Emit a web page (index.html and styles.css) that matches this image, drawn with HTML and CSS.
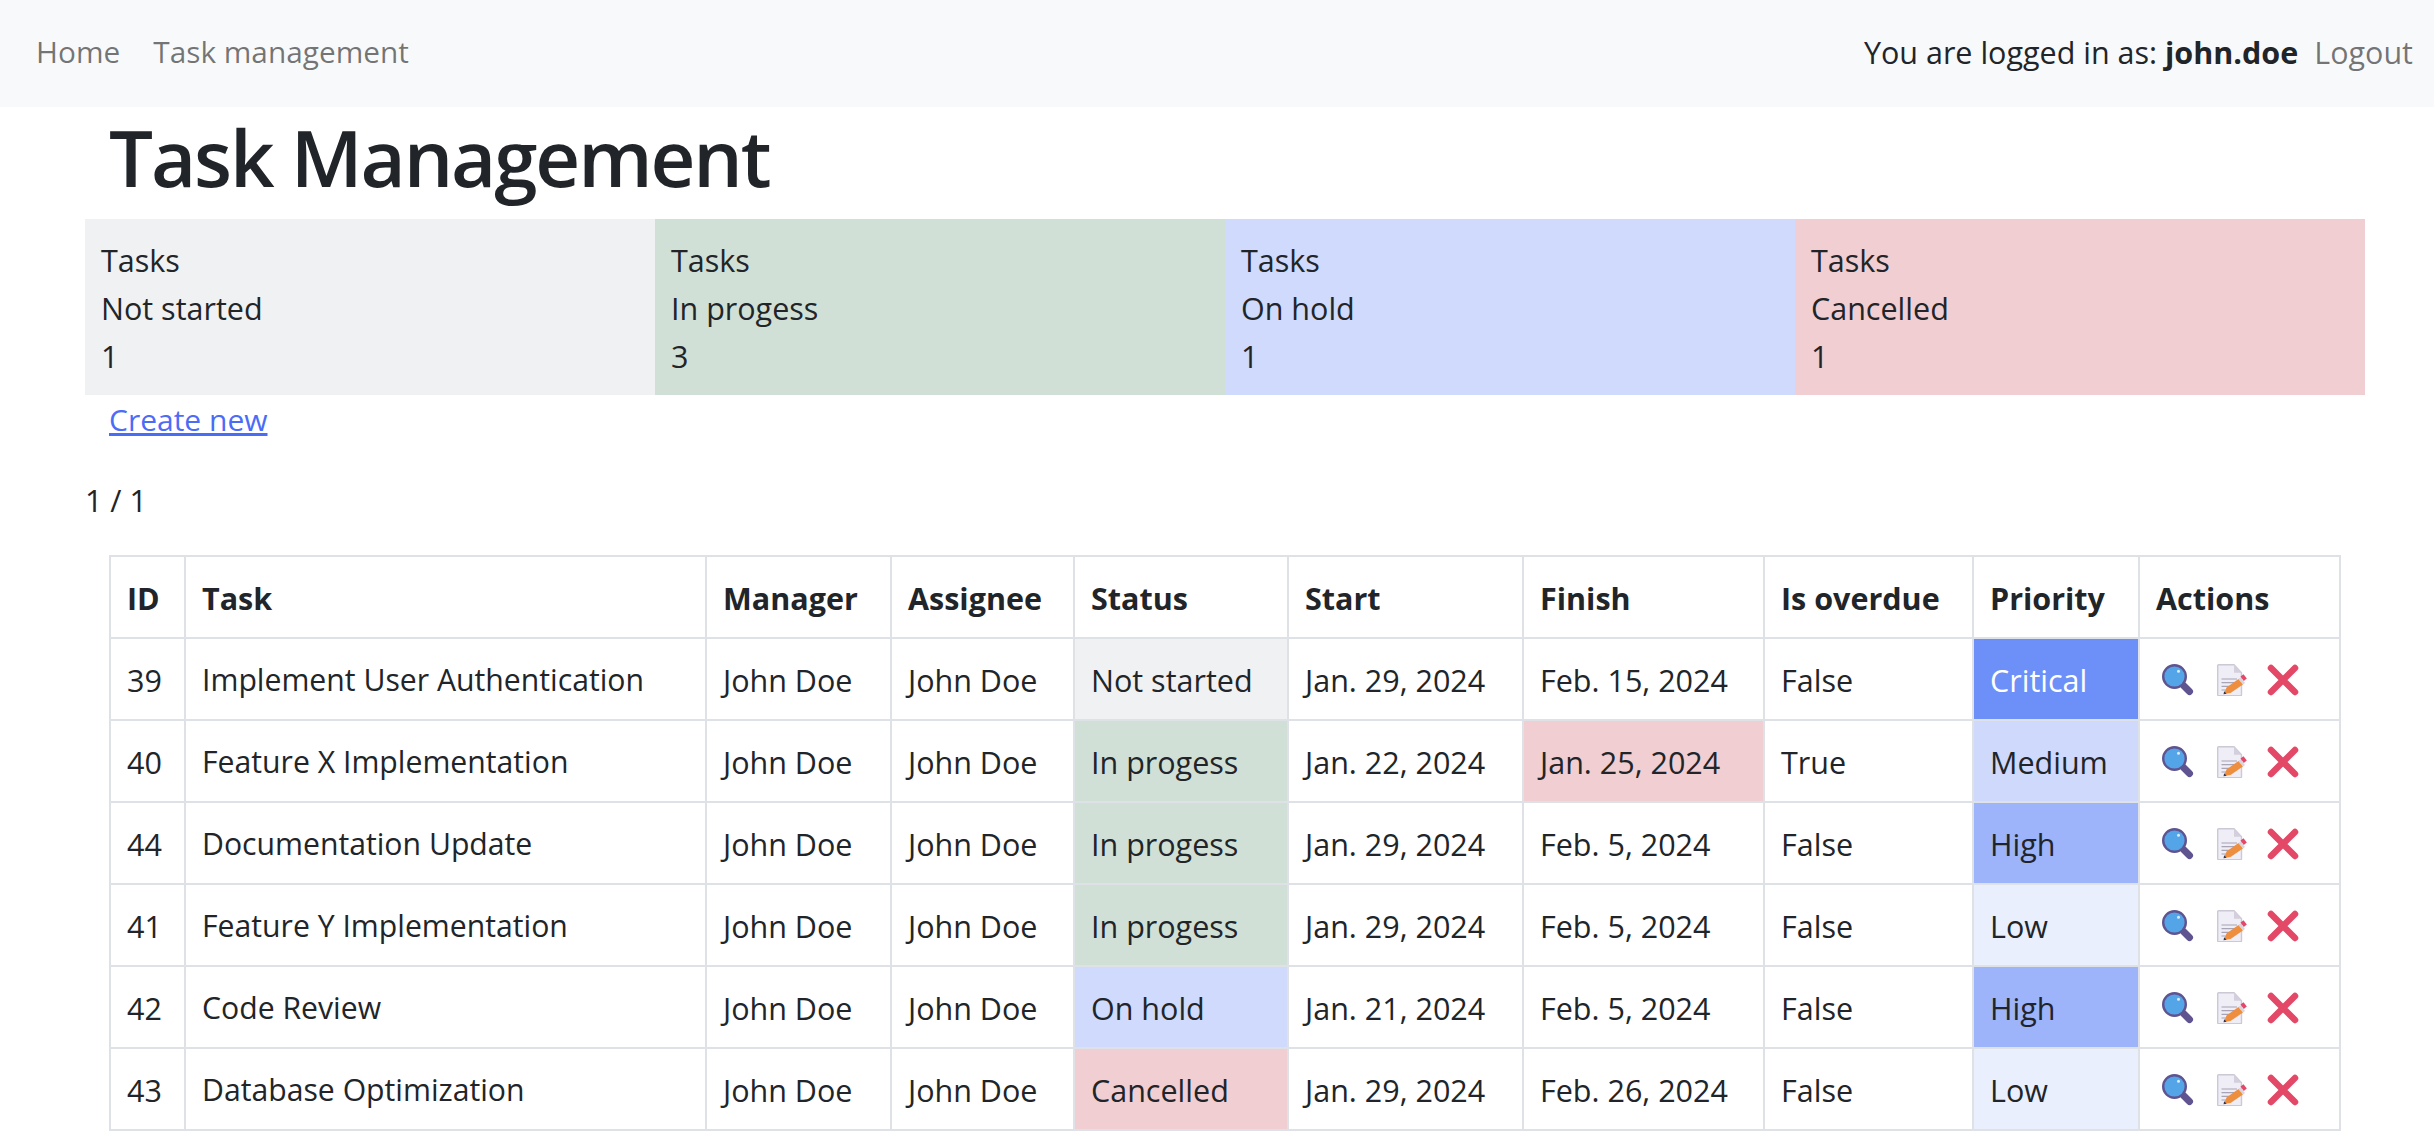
FILE: index.html
```html
<!DOCTYPE html>
<html lang="en">
<head>
<meta charset="utf-8">
<title>Task Management</title>
<link rel="stylesheet" href="styles.css">
</head>
<body>
<svg class="defs" width="0" height="0" aria-hidden="true">
  <defs>
    <symbol id="i-view" viewBox="0 0 32 32">
      <line x1="21.500" y1="21.500" x2="27.500" y2="27.500" stroke="#5f5490" stroke-width="7" stroke-linecap="round"/>
      <circle cx="12.500" cy="12.500" r="11.300" fill="#54a4e8" stroke="#5f5490" stroke-width="2.400"/>
      <circle cx="16.500" cy="7.300" r="1.500" fill="#d8ecfb"/>
    </symbol>
    <symbol id="i-edit" viewBox="0 0 32 32">
      <path d="M.7 1.700a1 1 0 0 1 1-1H17l7.500 8v22a1 1 0 0 1-1 1H1.700a1 1 0 0 1-1-1z" fill="#efedf5" stroke="#cdc8d6" stroke-width="1.400"/>
      <path d="M17 .7v8h7.500z" fill="#d3cfdc"/>
      <path d="M4.500 15h15.500M4.500 18.700h15.500M4.500 22.300h10M4.500 26h5" stroke="#a8a3b5" stroke-width="1.200"/>
      <path d="M9.500 23.500L21.500 15l4.500 5.500-12.500 8.500-6.500 1z" fill="#ee8e3f"/>
      <path d="M21.500 15l2-1.500 4.500 5.500-2 1.500z" fill="#d8d3dc"/>
      <path d="M23.500 12.500l3-2.200 3.300 4.200-3 2.500z" fill="#e2486a"/>
      <path d="M6.500 30.300l.7-3 2.400 2.400z" fill="#3a3440"/>
    </symbol>
    <symbol id="i-del" viewBox="0 0 32 32">
      <path d="M4 4l24 24M28 4L4 28" stroke="#e34867" stroke-width="6.500" stroke-linecap="round" fill="none"/>
    </symbol>
  </defs>
</svg>
<nav class="navbar">
  <ul class="nav-list">
    <li><a class="nav-link" href="#">Home</a></li>
    <li><a class="nav-link" href="#">Task management</a></li>
  </ul>
  <div class="nav-user">
    <span class="user-text">You are logged in as: <strong>john.doe</strong></span>
    <a class="nav-link" href="#">Logout</a>
  </div>
</nav>
<main class="page">
  <h1 class="title">Task Management</h1>
  <section class="stats">
    <div class="stat st-gray"><div>Tasks</div><div>Not started</div><div>1</div></div>
    <div class="stat st-green"><div>Tasks</div><div>In progess</div><div>3</div></div>
    <div class="stat st-blue"><div>Tasks</div><div>On hold</div><div>1</div></div>
    <div class="stat st-red"><div>Tasks</div><div>Cancelled</div><div>1</div></div>
  </section>
  <p class="create"><a href="#">Create new</a></p>
  <p class="pager">1 / 1</p>
  <div class="table-wrap">
  <table class="tasks">
    <colgroup>
      <col class="c1"><col class="c2"><col class="c3"><col class="c4"><col class="c5"><col class="c6"><col class="c7"><col class="c8"><col class="c9"><col class="c10">
    </colgroup>
    <thead>
      <tr><th>ID</th><th>Task</th><th>Manager</th><th>Assignee</th><th>Status</th><th>Start</th><th>Finish</th><th>Is overdue</th><th>Priority</th><th>Actions</th></tr>
    </thead>
    <tbody>
      <tr><td>39</td><td class="name">Implement User Authentication</td><td>John Doe</td><td>John Doe</td><td class="st-gray">Not started</td><td>Jan. 29, 2024</td><td>Feb. 15, 2024</td><td>False</td><td class="p-critical">Critical</td><td class="actions"><svg class="ic ic-view"><use href="#i-view"/></svg><svg class="ic ic-edit"><use href="#i-edit"/></svg><svg class="ic"><use href="#i-del"/></svg></td></tr>
      <tr><td>40</td><td class="name">Feature X Implementation</td><td>John Doe</td><td>John Doe</td><td class="st-green">In progess</td><td>Jan. 22, 2024</td><td class="st-red">Jan. 25, 2024</td><td>True</td><td class="p-medium">Medium</td><td class="actions"><svg class="ic ic-view"><use href="#i-view"/></svg><svg class="ic ic-edit"><use href="#i-edit"/></svg><svg class="ic"><use href="#i-del"/></svg></td></tr>
      <tr><td>44</td><td class="name">Documentation Update</td><td>John Doe</td><td>John Doe</td><td class="st-green">In progess</td><td>Jan. 29, 2024</td><td>Feb. 5, 2024</td><td>False</td><td class="p-high">High</td><td class="actions"><svg class="ic ic-view"><use href="#i-view"/></svg><svg class="ic ic-edit"><use href="#i-edit"/></svg><svg class="ic"><use href="#i-del"/></svg></td></tr>
      <tr><td>41</td><td class="name">Feature Y Implementation</td><td>John Doe</td><td>John Doe</td><td class="st-green">In progess</td><td>Jan. 29, 2024</td><td>Feb. 5, 2024</td><td>False</td><td class="p-low">Low</td><td class="actions"><svg class="ic ic-view"><use href="#i-view"/></svg><svg class="ic ic-edit"><use href="#i-edit"/></svg><svg class="ic"><use href="#i-del"/></svg></td></tr>
      <tr><td>42</td><td class="name">Code Review</td><td>John Doe</td><td>John Doe</td><td class="st-blue">On hold</td><td>Jan. 21, 2024</td><td>Feb. 5, 2024</td><td>False</td><td class="p-high">High</td><td class="actions"><svg class="ic ic-view"><use href="#i-view"/></svg><svg class="ic ic-edit"><use href="#i-edit"/></svg><svg class="ic"><use href="#i-del"/></svg></td></tr>
      <tr><td>43</td><td class="name">Database Optimization</td><td>John Doe</td><td>John Doe</td><td class="st-red">Cancelled</td><td>Jan. 29, 2024</td><td>Feb. 26, 2024</td><td>False</td><td class="p-low">Low</td><td class="actions"><svg class="ic ic-view"><use href="#i-view"/></svg><svg class="ic ic-edit"><use href="#i-edit"/></svg><svg class="ic"><use href="#i-del"/></svg></td></tr>
    </tbody>
  </table>
  </div>
</main>
</body>
</html>
```
FILE: styles.css
```css
* { box-sizing: border-box; }
html, body { margin: 0; padding: 0; }
body {
  font-family: "Open Sans", "Noto Sans", sans-serif;
  font-size: 30.5px;
  line-height: 48px;
  color: #212529;
  background: #fff;
  overflow-x: hidden;
}
.defs { position: absolute; }
.navbar {
  display: flex;
  justify-content: space-between;
  align-items: center;
  height: 107px;
  background: #f8f9fa;
  padding: 0 5px 3px 20px;
}
.nav-list { display: flex; list-style: none; margin: 0; padding: 0; font-size: 29.8px; }
.nav-list li + li { margin-left: 1px; }
.nav-link { display: block; padding: 8px 16px; color: rgba(0,0,0,.55); text-decoration: none; }
.nav-user { display: flex; align-items: center; }
.user-text strong { font-weight: 700; }
.page { padding: 0 69px 0 85px; }
.title { margin: 0; padding: 0 24px; height: 112px; font-size: 78px; line-height: 100px; font-weight: 600; letter-spacing: -2.100px; }
.stats { display: grid; grid-template-columns: repeat(4, 1fr); }
.stat { padding: 17px 16px 15px; height: 176px; }
.st-gray { background: #eff1f3; }
.st-green { background: #d1e0d6; }
.st-blue { background: #cfdafc; }
.st-red { background: #f0ced2; }
.create { margin: 0; padding: 0 24px; height: 80px; line-height: 50px; font-size: 30px; }
.create a { color: #4a6cf7; }
.pager { margin: 0; padding-top: 1px; height: 80px; line-height: 48px; }
.table-wrap { padding: 0 24px; }
.tasks { border-collapse: collapse; table-layout: fixed; width: 2230px; }
.tasks th, .tasks td { border: 2px solid #dee2e6; padding: 17px 16px 15px; height: 82px; white-space: nowrap; text-align: left; }
.tasks th { font-weight: 700; }
.tasks .name { font-size: 30.2px; }
.c1 { width: 75px; }
.c2 { width: 521px; }
.c3 { width: 185px; }
.c4 { width: 183px; }
.c5 { width: 214px; }
.c6 { width: 235px; }
.c7 { width: 241px; }
.c8 { width: 209px; }
.c9 { width: 166px; }
.c10 { width: 201px; }
.p-critical { background: #6c8ff8; color: #fff; }
.p-high { background: #9db4fa; }
.p-medium { background: #ced9fc; }
.p-low { background: #e9effd; }
.tasks .actions { font-size: 0; padding: 16px 16px 16px 22px; }
.ic { width: 32px; height: 32px; vertical-align: middle; margin-top: 2px; }
.ic-view { margin-right: 23px; }
.ic-edit { margin-right: 18px; }
```
